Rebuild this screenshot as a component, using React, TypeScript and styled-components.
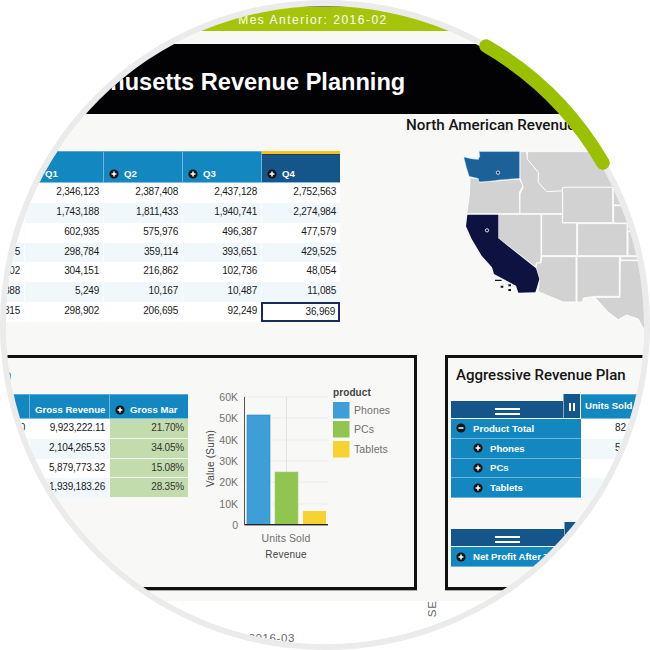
import React from "react";
import styled, { createGlobalStyle } from "styled-components";

const Global = createGlobalStyle`
  html, body { margin: 0; padding: 0; background: #fff; }
  body { font-family: "Liberation Sans", Arial, sans-serif; }
`;

const Frame = styled.div`
  position: relative;
  width: 650px;
  height: 650px;
`;

const Stage = styled.div`
  width: 650px;
  height: 650px;
  box-sizing: border-box;
  border: 6px solid #ebebeb;
  border-radius: 50%;
  overflow: hidden;
  background: #fff;
  display: flex;
  flex-direction: column;
`;

const TopBand = styled.div`
  flex: 0 0 25px;
  min-height: 0;
  background: #a5c40a;
  box-shadow: inset 0 1px 0 #808080;
  color: #fff;
  font-size: 12px;
  letter-spacing: 1.5px;
  display: flex;
  align-items: flex-end;
  justify-content: center;
  padding: 0 24px 4px 0;
  box-sizing: border-box;
  line-height: 14px;
`;

const BandGap = styled.div`
  flex: 0 0 13px;
  background: #f8f8f7;
`;

const Header = styled.div`
  flex: 0 0 70px;
  min-height: 0;
  box-sizing: border-box;
  background: #020204;
  color: #fff;
  font-size: 23.6px;
  font-weight: 700;
  display: flex;
  align-items: center;
  padding: 6px 0 0 19px;
  white-space: nowrap;
`;

const Body = styled.div`
  flex: 0 0 487px;
  min-height: 0;
  background: #f8f8f7;
  display: flex;
  flex-direction: column;
`;

const TopRow = styled.div`
  flex: 0 0 241px;
  min-height: 0;
  display: flex;
`;

const TableWrap = styled.div`
  flex: 0 0 auto;
  margin: 37px 0 0 -61px;
`;

const Grid = styled.div<{ $cols: string }>`
  display: grid;
  grid-template-columns: ${(p) => p.$cols};
  align-self: start;
  color: #1a1a1a;
  font-size: 10px;
  letter-spacing: -0.2px;
`;

const HeadCell = styled.div<{ $active?: boolean; $h?: number }>`
  height: ${(p) => p.$h ?? 32}px;
  box-sizing: border-box;
  background: ${(p) => (p.$active ? "#14568a" : "#1287c0")};
  border-top: ${(p) => (p.$active ? "3px solid #f6c21c" : "1px solid #5aa9d8")};
  border-left: 1px solid #6fb5dc;
  border-bottom: 1px solid #7cc0e8;
  color: #fff;
  font-weight: 700;
  font-size: 9.6px;
  letter-spacing: 0;
  display: flex;
  align-items: flex-end;
  gap: 5px;
  padding: 0 0 3px 5px;
  white-space: nowrap;
  overflow: hidden;
  box-shadow: ${(p) => (p.$active ? "inset 0 1px 0 #2b3a50" : "none")};
`;

const Cell = styled.div<{ $alt?: boolean; $h?: number }>`
  height: ${(p) => p.$h ?? 19.86}px;
  box-sizing: border-box;
  background: ${(p) => (p.$alt ? "#f1f8fc" : "#fff")};
  border-left: 1px solid #fbfdfe;
  text-align: right;
  padding: 0 4px 0 0;
  line-height: 18px;
  white-space: nowrap;
`;

const UnitsValue = styled(Cell)`
  font-size: 10px;
  text-align: left;
  padding: 0 0 0 33px;
`;

const SelectedCell = styled(Cell)`
  border: 2px solid #1b2a5e;
  line-height: 15px;
  padding-right: 3px;
`;

const MarginCell = styled(Cell)`
  background: #c3dcae;
  border-bottom: 1px solid #f4f8f0;
  color: #333;
`;

const RightCol = styled.div`
  flex: 0 0 auto;
  margin-left: 66px;
`;

const SectionTitle = styled.div`
  font-family: Roboto, "Liberation Sans", sans-serif;
  font-weight: 500;
  font-size: 15px;
  line-height: 20px;
  color: #151515;
  white-space: nowrap;
`;

const MapTitle = styled(SectionTitle)`
  font-size: 15.2px;
  margin-top: 1px;
`;

const MapBox = styled.svg`
  display: block;
  width: 220px;
  height: 200px;
  margin: 4px 0 0 24px;
`;

const BottomRow = styled.div`
  flex: 0 0 235px;
  min-height: 0;
  display: flex;
  gap: 28px;
`;

const Panel = styled.div`
  box-sizing: border-box;
  height: 235px;
  border: 3px solid #111;
  box-shadow: 0 1px 0 #aaa;
  flex: 0 0 auto;
`;

const LeftPanel = styled(Panel)`
  width: 597px;
  margin-left: -186px;
  padding-left: 127px;
  display: grid;
  grid-template-columns: 238px 1fr;
  grid-template-rows: 36px 1fr;
`;

const FragmentTitle = styled(SectionTitle)`
  grid-column: 1;
  margin-left: -121px;
  line-height: 34px;
`;

const ChartBox = styled.svg`
  grid-column: 2;
  grid-row: 1 / 3;
  width: 195px;
  height: 200px;
  margin: 22px 0 0 16px;
  display: block;
`;

const RightPanel = styled(Panel)`
  width: 300px;
  padding-left: 3px;
`;

const PlanTitle = styled(SectionTitle)`
  line-height: 34px;
  height: 36px;
  padding-left: 5px;
`;

const Pivot = styled.div`
  display: grid;
  grid-template-columns: 130px 68px;
  color: #1a1a1a;
`;

const PivotHead = styled.div`
  height: 25px;
  display: flex;
  align-items: flex-end;
`;

const HandleBar = styled.div<{ $w: number }>`
  width: ${(p) => p.$w}px;
  height: 17px;
  margin-bottom: 1px;
  background: #14568a;
  display: flex;
  align-items: center;
  justify-content: center;
`;

const HandleLines = styled.div`
  width: 25px;
  height: 3px;
  border-top: 2px solid #fff;
  border-bottom: 2px solid #fff;
  margin-top: 3px;
`;

const PauseTab = styled.div`
  width: 17px;
  height: 24px;
  margin: 0 1px 1px 0;
  background: #14568a;
  border-left: 1px solid #8da9bf;
  box-sizing: border-box;
  display: flex;
  justify-content: center;
  align-items: flex-start;
  gap: 2px;
  padding-top: 9px;
`;

const PauseLine = styled.span`
  width: 2px;
  height: 8px;
  background: #fff;
`;

const UnitsHead = styled(HeadCell)`
  height: 25px;
  align-items: flex-start;
  padding: 5px 0 0 4px;
  border-left: 0;
`;

const RowLabel = styled.div<{ $indent?: boolean }>`
  height: 19.8px;
  box-sizing: border-box;
  background: #1287c0;
  border-bottom: 1px solid #6fb5dc;
  color: #fff;
  font-weight: 700;
  font-size: 9.6px;
  display: flex;
  align-items: center;
  gap: 7px;
  padding-left: ${(p) => (p.$indent ? 22 : 5)}px;
  white-space: nowrap;
`;

const SecondPivot = styled.div`
  margin-top: 24px;
  width: 200px;
`;

const WideRow = styled(RowLabel)`
  height: 20px;
  width: 200px;
`;

const Footer = styled.div`
  flex: 1;
  min-height: 0;
  background: #fff;
  display: flex;
  align-items: flex-start;
  color: #666;
  font-size: 11.5px;
`;

const DateText = styled.div`
  width: 289px;
  margin-top: 31px;
  text-align: right;
  letter-spacing: 0.6px;
  white-space: nowrap;
`;

const RotatedLabel = styled.div`
  writing-mode: vertical-rl;
  transform: rotate(180deg);
  margin: -1px 0 0 131px;
  letter-spacing: 1px;
`;

const Arc = styled.svg`
  position: absolute;
  left: 0;
  top: 0;
  width: 650px;
  height: 650px;
  pointer-events: none;
`;

const ExpandGlyph = styled.svg`
  flex: 0 0 auto;
`;

const Expand: React.FC<{ minus?: boolean }> = ({ minus }) => (
  <ExpandGlyph width="10" height="10" viewBox="0 0 10 10">
    <circle cx="5" cy="5" r="4.6" fill="#161616" />
    <path d={minus ? "M2.5 5h5" : "M2.6 5h4.8M5 2.6v4.8"} stroke="#fff" strokeWidth="1.5" />
  </ExpandGlyph>
);

const quarters = ["Q1", "Q2", "Q3", "Q4"];
const rows = [
  ["", "2,346,123", "2,387,408", "2,437,128", "2,752,563"],
  ["", "1,743,188", "1,811,433", "1,940,741", "2,274,984"],
  ["", "602,935", "575,976", "496,387", "477,579"],
  ["5", "298,784", "359,114", "393,651", "429,525"],
  ["02", "304,151", "216,862", "102,736", "48,054"],
  ["388", "5,249", "10,167", "10,487", "11,085"],
  ["315", "298,902", "206,695", "92,249", "36,969"],
];
const revenue = [
  ["0", "9,923,222.11", "21.70%"],
  ["", "2,104,265.53", "34.05%"],
  ["", "5,879,773.32", "15.08%"],
  ["", "1,939,183.26", "28.35%"],
];
const products = [
  { name: "Product Total", top: true, units: "82," },
  { name: "Phones", units: "5" },
  { name: "PCs", units: "" },
  { name: "Tablets", units: "" },
];

const USMap = () => (
  <MapBox viewBox="0 0 660 600">
    <g fill="#d2d2d2" stroke="#fff" strokeWidth="2.5" strokeLinejoin="round">
      <path d="M120 116L146 120L148 130L268 120L280 140L268 160L270 224L110 224L118 170Z" />
      <path d="M270 224L270 165L280 145L270 118L270 38L290 38L292 60L325 100L325 130L350 158L397 155L398 224Z" />
      <path d="M292 38L480 38L540 100L560 145L398 145L397 155L350 158L325 130L325 100L292 60Z" />
      <path d="M398 145L548 145L548 251L398 251Z" />
      <path d="M550 145L580 145L600 198L550 198Z" />
      <path d="M551 200L590 200L620 276L592 276L592 252L551 252Z" />
      <path d="M594 278L640 278L650 350L594 350Z" />
      <path d="M205 226L333 226L333 352L331 372L318 372L318 385L205 298Z" />
      <path d="M335 226L397 226L397 252L440 252L440 350L335 350Z" />
      <path d="M443 254L591 254L591 350L443 350Z" />
      <path d="M335 353L438 353L438 489L400 489L325 458L328 420L318 388L320 372L333 372Z" />
      <path d="M441 353L568 353L568 472L494 472L460 477L458 489L441 489Z" />
      <path d="M572 353L650 353L650 363L572 363Z" />
      <path d="M571 365L650 365L650 575L638 565L625 540L590 528L565 542L535 520L494 475L570 475Z" />
    </g>
    <path
      fill="#1c6198"
      stroke="#5aa9d8"
      strokeWidth="1"
      d="M148 38L268 38L268 118L210 122L180 126L148 128L145 118L118 112L110 86L102 55L125 60L145 62L150 52Z"
    />
    <path
      fill="#0d1240"
      d="M112 227L205 227L205 298L318 388L328 420L320 448L316 460L265 461L258 440L230 425L192 405L186 385L155 350L125 300L108 262Z"
    />
    <path fill="#0d1240" d="M195 422h20v4h-20zM212 440h8v6h-8zM235 436h8v6h-8zM235 450h8v6h-8z" />
    <circle cx="204" cy="101" r="5" fill="#12223c" stroke="#fff" strokeWidth="2.5" />
    <circle cx="171" cy="274" r="5" fill="#12223c" stroke="#fff" strokeWidth="2.5" />
  </MapBox>
);

const ChartLabel = styled.text`
  font-family: "Liberation Sans", Arial, sans-serif;
  font-size: 10.5px;
  fill: #707070;
`;

const ChartTitleLabel = styled(ChartLabel)`
  fill: #444;
  font-size: 10px;
`;

const Chart = () => {
  const ticks = [
    ["60K", 397],
    ["50K", 418],
    ["40K", 440],
    ["30K", 461],
    ["20K", 482],
    ["10K", 504],
    ["0", 525],
  ] as const;
  const legend = [
    ["Phones", "#3e9fd8", 402],
    ["PCs", "#90c550", 421],
    ["Tablets", "#f6d233", 441],
  ] as const;
  return (
    <ChartBox viewBox="205 380 195 200">
      {ticks.map(([label, y]) => (
        <g key={label}>
          <path d={`M245 ${y}H329`} stroke="#ececec" strokeWidth="1" />
          <ChartLabel x="239" y={y + 4} textAnchor="end">
            {label}
          </ChartLabel>
        </g>
      ))}
      <path d="M287.5 397V525" stroke="#e2e2e2" strokeWidth="1" />
      <rect x="248" y="415" width="23" height="109.5" fill="#3e9fd8" stroke="#2f86bb" strokeWidth="0.6" />
      <rect x="276" y="472" width="23" height="52.5" fill="#90c550" stroke="#a9cf7c" strokeWidth="0.6" />
      <rect x="304" y="511" width="23" height="13.5" fill="#f6d233" />
      <path d="M245.5 397V525H329" fill="none" stroke="#555" strokeWidth="1" />
      <path d="M246 524.5H329" stroke="#222" strokeWidth="1" />
      <ChartLabel x="287" y="542" textAnchor="middle" letterSpacing="0.1">
        Units Sold
      </ChartLabel>
      <ChartTitleLabel x="287" y="558" textAnchor="middle" letterSpacing="0.2">
        Revenue
      </ChartTitleLabel>
      <ChartTitleLabel x="0" y="0" transform="translate(215 487) rotate(-90)" letterSpacing="0.2">
        Value (Sum)
      </ChartTitleLabel>
      <ChartTitleLabel x="334" y="396" fontWeight="700" letterSpacing="0.1">
        product
      </ChartTitleLabel>
      {legend.map(([label, color, y]) => (
        <g key={label}>
          <rect x="334" y={y} width="16.5" height="16.5" fill={color} />
          <ChartLabel x="355" y={y + 12} letterSpacing="0.1">
            {label}
          </ChartLabel>
        </g>
      ))}
    </ChartBox>
  );
};

export default function App() {
  return (
    <Frame>
      <Global />
      <Stage>
        <TopBand>Mes Anterior: 2016-02</TopBand>
        <BandGap />
        <Header>Massachusetts Revenue Planning</Header>
        <Body>
          <TopRow>
            <TableWrap>
              <Grid $cols="79px 79px 79px 79px 79px">
                <HeadCell />
                {quarters.map((q, i) => (
                  <HeadCell key={q} $active={i === 3}>
                    <Expand />
                    {q}
                  </HeadCell>
                ))}
                {rows.map((r, i) =>
                  r.map((v, j) =>
                    i === 6 && j === 4 ? (
                      <SelectedCell key={j}>{v}</SelectedCell>
                    ) : (
                      <Cell key={`${i}-${j}`} $alt={i % 2 === 1}>
                        {v}
                      </Cell>
                    )
                  )
                )}
              </Grid>
            </TableWrap>
            <RightCol>
              <MapTitle>North American Revenue</MapTitle>
              <USMap />
            </RightCol>
          </TopRow>
          <BottomRow>
            <LeftPanel>
              <FragmentTitle>Conservative Revenue Plan</FragmentTitle>
              <Grid $cols="79px 80px 79px">
                <HeadCell $h={25} />
                <HeadCell $h={25}>Gross Revenue</HeadCell>
                <HeadCell $h={25}>
                  <Expand />
                  Gross Mar
                </HeadCell>
                {revenue.map((r, i) => (
                  <React.Fragment key={i}>
                    <Cell $alt={i % 2 === 1} $h={19.8}>{r[0]}</Cell>
                    <Cell $alt={i % 2 === 1} $h={19.8}>{r[1]}</Cell>
                    <MarginCell $h={19.8}>{r[2]}</MarginCell>
                  </React.Fragment>
                ))}
              </Grid>
              <Chart />
            </LeftPanel>
            <RightPanel>
              <PlanTitle>Aggressive Revenue Plan</PlanTitle>
              <Pivot>
                <PivotHead>
                  <HandleBar $w={112}>
                    <HandleLines />
                  </HandleBar>
                  <PauseTab>
                    <PauseLine />
                    <PauseLine />
                  </PauseTab>
                </PivotHead>
                <UnitsHead>Units Sold</UnitsHead>
                {products.map((p, i) => (
                  <React.Fragment key={p.name}>
                    <RowLabel $indent={!p.top}>
                      <Expand minus={p.top} />
                      {p.name}
                    </RowLabel>
                    <UnitsValue $alt={i % 2 === 1} $h={19.8}>
                      {p.units}
                    </UnitsValue>
                  </React.Fragment>
                ))}
              </Pivot>
              <SecondPivot>
                <PivotHead>
                  <HandleBar $w={113}>
                    <HandleLines />
                  </HandleBar>
                  <PauseTab />
                </PivotHead>
                <WideRow>
                  <Expand />
                  Net Profit After Tax
                </WideRow>
              </SecondPivot>
            </RightPanel>
          </BottomRow>
        </Body>
        <Footer>
          <DateText>Mes Siguiente: 2016-03</DateText>
          <RotatedLabel>SE</RotatedLabel>
        </Footer>
      </Stage>
      <Arc viewBox="0 0 650 650">
        <path
          d="M486 46A322 322 0 0 1 603 163"
          fill="none"
          stroke="#9bc000"
          strokeWidth="13.5"
          strokeLinecap="round"
        />
      </Arc>
    </Frame>
  );
}
